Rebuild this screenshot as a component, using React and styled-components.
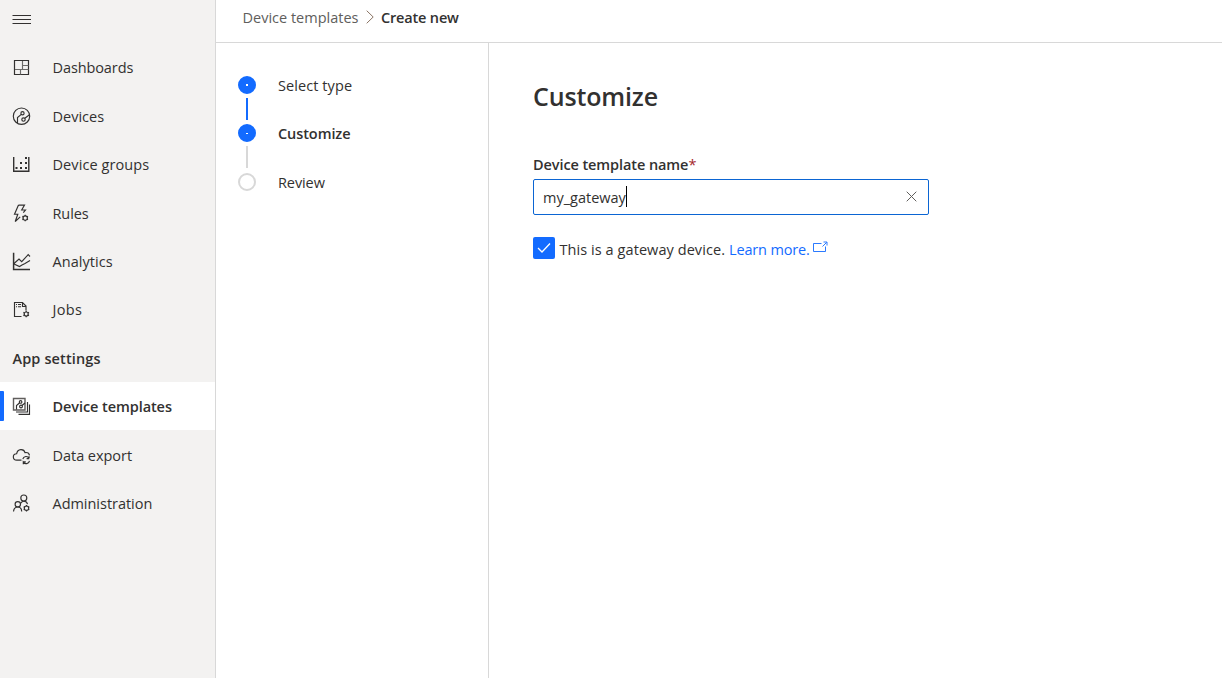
import React from "react";
import styled, { createGlobalStyle } from "styled-components";

const Global = createGlobalStyle`
  * { box-sizing: border-box; }
  body { margin: 0; background: #fff; color: #323130; font: 400 14.5px/20px "Open Sans", "Noto Sans", sans-serif; }
`;

const Shell = styled.div`
  display: flex;
  width: 100%;
  height: 678px;
  overflow: hidden;
`;

const Sidebar = styled.nav`
  width: 216px;
  flex: none;
  background: #f3f2f1;
  border-right: 1px solid #d8d8d8;
`;

const MenuButton = styled.div`
  height: 43.4px;
  padding: 10px 12px;
  svg { display: block; }
`;

const NavRow = styled.div`
  display: flex;
  align-items: center;
  height: ${(p) => (p.$active ? 48 : 48.4)}px;
  margin-bottom: ${(p) => (p.$active ? 0.4 : 0)}px;
  padding: 1.6px 0 0 12px;
  background: ${(p) => (p.$active ? "#fff" : "transparent")};
  font-weight: ${(p) => (p.$active ? 600 : 400)};
  svg { flex: none; margin-right: 20.5px; }
`;

const ActiveBar = styled.span`
  width: 4px;
  height: 30px;
  margin: -1.6px 8px 0 -12px;
  background: #136bff;
  border-radius: 0 1px 1px 0;
`;

const SectionTitle = styled.div`
  display: flex;
  align-items: center;
  height: 48.4px;
  padding: 1.6px 0 0 12.5px;
  font-weight: 600;
`;

const Label = styled.span`
  white-space: nowrap;
  font-size: ${(p) => p.$size || 14.5}px;
  letter-spacing: ${(p) => p.$track || 0}px;
`;

const Page = styled.div`
  flex: 1;
  display: flex;
  flex-direction: column;
`;

const Breadcrumb = styled.header`
  display: flex;
  align-items: center;
  height: 43px;
  padding: 0 0 7px 26.5px;
  border-bottom: 1px solid #d8d8d8;
  color: #605e5c;
  svg { margin: -2px 6.5px 0 8px; }
  strong { font-weight: 600; color: #323130; }
`;

const Body = styled.div`
  flex: 1;
  display: flex;
`;

const Steps = styled.aside`
  width: 273px;
  flex: none;
  padding: 33px 0 0 22px;
  border-right: 1px solid #d8d8d8;
`;

const Step = styled.div`
  display: flex;
  height: 48.4px;
  font-weight: ${(p) => (p.$current ? 600 : 400)};
`;

const Track = styled.div`
  display: flex;
  flex-direction: column;
  align-items: center;
  width: 18px;
  margin-right: 22px;
`;

const Dot = styled.span`
  display: flex;
  align-items: center;
  justify-content: center;
  flex: none;
  width: 18px;
  height: 18px;
  border-radius: 50%;
  background: ${(p) => (p.$done ? "#136bff" : "#fff")};
  border: 2px solid ${(p) => (p.$done ? "#136bff" : "#d8d8d8")};
  &::after {
    content: "";
    width: 2px;
    height: ${(p) => (p.$small ? 1 : 2)}px;
    background: #fff;
  }
`;

const Connector = styled.span`
  width: 2px;
  height: 22px;
  margin-top: 4px;
  background: ${(p) => (p.$done ? "#136bff" : "#d8d8d8")};
`;

const Form = styled.main`
  padding: 35px 0 0 44px;
`;

const Title = styled.h1`
  margin: 0;
  height: 77px;
  line-height: 34px;
  font-weight: 600;
`;

const FieldLabel = styled.label`
  display: block;
  height: 24px;
  font-weight: 600;
  em { font-style: normal; color: #a4262c; font-weight: 400; }
`;

const Field = styled.div`
  display: flex;
  align-items: center;
  width: 396px;
  height: 36px;
  padding: 0 11px 0 9px;
  border: 1px solid #0b65d3;
  border-radius: 2px;
  span:first-child { padding-top: 2px; }
`;

const Caret = styled.span`
  width: 1px;
  height: 21px;
  margin-top: -2px;
  background: #000;
`;

const ClearIcon = styled.svg`
  margin: -1px 0 0 auto;
`;

const CheckRow = styled.div`
  display: flex;
  height: 24px;
  margin-top: 22px;
`;

const Checkbox = styled.span`
  width: 22px;
  height: 22px;
  margin-right: 4.5px;
  border-radius: 2px;
  background: #136bff;
  svg { display: block; }
`;

const CheckText = styled.div`
  display: flex;
  padding-top: 3px;
`;

const Link = styled.a`
  display: flex;
  margin-left: 4px;
  color: #136bff;
  svg { margin: 1px 0 0 3.5px; }
`;

const Icon = ({ children }) => (
  <svg width="20" height="20" viewBox="0 0 20 20" fill="none" stroke="#323130" strokeWidth="1.15">
    {children}
  </svg>
);

const Gear = ({ x, y, r = 2 }) => (
  <g transform={`translate(${x} ${y})`}>
    <circle r={r} />
    <path
      d="M0-3.2V-2M0 2V3.2M-2.8-1.6L-1.7-1M1.7 1L2.8 1.6M-2.8 1.6L-1.7 1M1.7-1L2.8-1.6"
      strokeWidth="1.2"
    />
  </g>
);

const icons = {
  dashboards: (
    <Icon>
      <path d="M2.5 2.5h14v14h-14z" strokeWidth="1.2" />
      <path d="M10.5 3v9M11 7.5h5.5M3 11.5h13.5M8.5 12v4.5" stroke="#6c6b69" />
    </Icon>
  ),
  devices: (
    <Icon>
      <g transform="translate(0 -0.8)">
        <circle cx="9.5" cy="10" r="8.2" />
        <circle cx="10.5" cy="7" r="1.6" />
        <circle cx="11.5" cy="13.3" r="1.7" />
        <path d="M9.3 8.2L5.5 11.3v5.5M12.8 12l4.7-3.500" />
      </g>
    </Icon>
  ),
  groups: (
    <Icon>
      <path d="M1.7 2v14.3h15.100V2" strokeWidth="1.4" />
      <g fill="#323130" stroke="none">
        <path d="M13 2h2v2h-2zM8 7h2v2H8zM13 7h2v2h-2zM3.5 12h2v2h-2zM8 12h2v2H8zM13 12h2v2h-2z" />
      </g>
    </Icon>
  ),
  rules: (
    <Icon>
      <path d="M6.5 1.1h6L9.7 6h3.8l-2.2 2.7M6.5 1.1L2.5 10.2h3.3L3.2 17.5l5-4.6" />
      <Gear x={13.2} y={14} r={2.2} />
    </Icon>
  ),
  analytics: (
    <Icon>
      <path d="M1.6.8v16.7H18" strokeWidth="1.5" />
      <path d="M2 11.5l5-4.5 2.7 2.7 6.5-7L18 4.5M2 12l5.5 2.5L10 13l3-1.5L18 8.5" />
    </Icon>
  ),
  jobs: (
    <Icon>
      <path d="M9.5 16.5h-7v-14h8l3.5 3.5v4.5M10.5 2.5v4h3.7" />
      <path d="M4 4.5h1M6 4.5h3M4 6.7h1M6 6.7h3" />
      <Gear x={14.2} y={14} />
    </Icon>
  ),
  templates: (
    <Icon>
      <path d="M1.5 1.5h11.500v11.500H1.500z" stroke="#605e5c" strokeWidth="1.4" />
      <path d="M4 15h11.500V5M6.500 17.3H17.500V7.500" />
      <circle cx="8.6" cy="4.9" r="1.3" />
      <circle cx="9" cy="9.5" r="1.4" />
      <path d="M7.7 5.8L4.5 8.5v4M10 8.5l3-2.5" />
    </Icon>
  ),
  dataExport: (
    <Icon>
      <g transform="translate(0 0.6)">
        <path d="M9.5 13.5H4.8C.2 13.5.2 7.3 4.6 7.2 5.6 1.7 12 2 13 6c2.2-.3 4.2.8 4.5 2.8" />
        <path d="M10.8 12.500a3.400 3.400 0 016.300-.8v-2M17.2 12h-2.600M17.500 14.300a3.400 3.400 0 01-6.200 1.200v2.200M11.200 15.200h2.600" />
      </g>
    </Icon>
  ),
  admin: (
    <Icon>
      <circle cx="11.8" cy="4" r="3" />
      <circle cx="5.8" cy="10.3" r="2.7" />
      <path d="M1.5 17.5c.3-3 2-4.5 4.3-4.5 2.2 0 3.8 1.7 3.9 4.5M8.5 9.3C9.5 7.9 10.6 7.2 11.9 7.2c2 0 3.3 1.2 3.6 3" />
      <Gear x={14.5} y={14.2} r={2.2} />
    </Icon>
  ),
};

const mainNav = [
  { icon: "dashboards", text: "Dashboards", track: -0.1 },
  { icon: "devices", text: "Devices" },
  { icon: "groups", text: "Device groups", track: 0.08 },
  { icon: "rules", text: "Rules", track: -0.08 },
  { icon: "analytics", text: "Analytics", track: 0.05 },
  { icon: "jobs", text: "Jobs", track: 0.3 },
];

const settingsNav = [
  { icon: "templates", text: "Device templates", active: true, track: -0.08 },
  { icon: "dataExport", text: "Data export", track: -0.04 },
  { icon: "admin", text: "Administration", track: -0.03 },
];

const NavItem = ({ icon, text, track, active }) => (
  <NavRow $active={active}>
    {active && <ActiveBar />}
    {icons[icon]}
    <Label $track={track}>{text}</Label>
  </NavRow>
);

export default function App() {
  return (
    <Shell>
      <Global />
      <Sidebar>
        <MenuButton>
          <svg width="20" height="20" viewBox="0 0 20 20" stroke="#323130">
            <path d="M.5 5.5h18.500M.5 9.5h18.500M.5 13.5h18.500" />
          </svg>
        </MenuButton>
        {mainNav.map((n) => <NavItem key={n.text} {...n} />)}
        <SectionTitle><Label $track={0.12}>App settings</Label></SectionTitle>
        {settingsNav.map((n) => <NavItem key={n.text} {...n} />)}
      </Sidebar>
      <Page>
        <Breadcrumb>
          <Label>Device templates</Label>
          <svg width="8" height="14" viewBox="0 0 8 14" fill="none" stroke="#8a7464">
            <path d="M.7.7L7.2 7 .7 13.3" />
          </svg>
          <strong><Label $track={-0.17}>Create new</Label></strong>
        </Breadcrumb>
        <Body>
          <Steps>
            <Step>
              <Track><Dot $done /><Connector $done /></Track>
              <Label $track={0.08}>Select type</Label>
            </Step>
            <Step $current>
              <Track><Dot $done $small /><Connector /></Track>
              <Label $track={-0.08}>Customize</Label>
            </Step>
            <Step>
              <Track><Dot /></Track>
              <Label $track={-0.1}>Review</Label>
            </Step>
          </Steps>
          <Form>
            <Title><Label $size={25} $track={-0.15}>Customize</Label></Title>
            <FieldLabel><Label $track={-0.09}>Device template name</Label><em>*</em></FieldLabel>
            <Field>
              <Label>my_gateway</Label>
              <Caret />
              <ClearIcon width="11" height="11" viewBox="0 0 11 11" stroke="#605e5c">
                <path d="M.7.7l9.6 9.6M10.3.7L.7 10.3" />
              </ClearIcon>
            </Field>
            <CheckRow>
              <Checkbox>
                <svg width="22" height="22" viewBox="0 0 22 22" fill="none" stroke="#fff" strokeWidth="1.3">
                  <path d="M5 11l4 4 8-8.5" />
                </svg>
              </Checkbox>
              <CheckText>
                <Label $track={0.07}>This is a gateway device.</Label>
                <Link>
                  <Label $track={-0.15}>Learn more.</Label>
                  <svg width="15" height="12" viewBox="0 0 15 12" fill="none" stroke="#136bff">
                    <path d="M8.5 2.5h-8v8h12V5.5M9.5 5.5l4-4M10.5 1h3.500v3.5" strokeWidth=".9" />
                  </svg>
                </Link>
              </CheckText>
            </CheckRow>
          </Form>
        </Body>
      </Page>
    </Shell>
  );
}
